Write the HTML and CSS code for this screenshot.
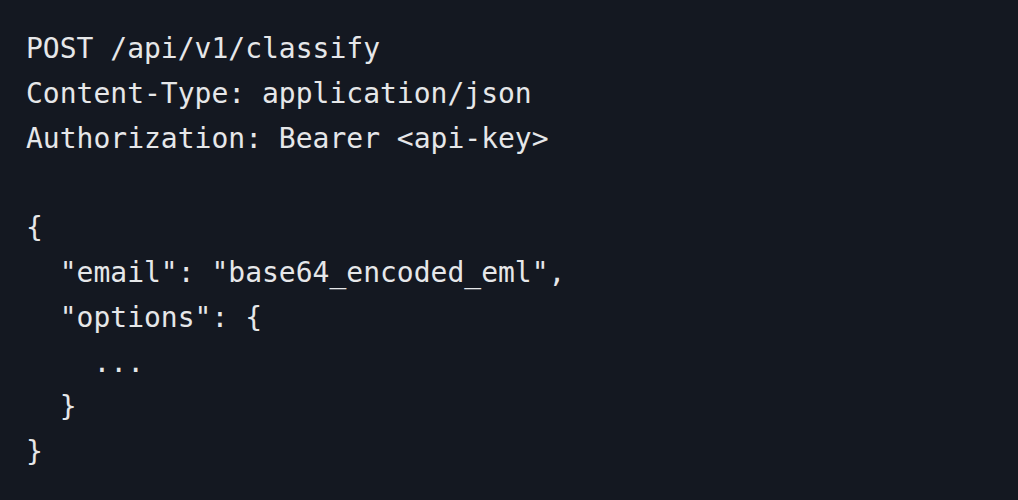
FILE: index.html
```html
<!DOCTYPE html>
<html lang="en">
<head>
<meta charset="utf-8">
<link rel="stylesheet" href="styles.css">
</head>
<body>
<pre class="code">POST /api/v1/classify
Content-Type: application/json
Authorization: Bearer &lt;api-key&gt;

{
  "email": "base64_encoded_eml",
  "options": {
    ...
  }
}</pre>
</body>
</html>
```
FILE: styles.css
```css
html, body {
  margin: 0;
  padding: 0;
  background: #141821;
  height: 100%;
}
.code {
  margin: 0;
  padding: 27px 24px 24px 26px;
  font-family: "DejaVu Sans Mono", "Liberation Mono", monospace;
  font-size: 28px;
  line-height: 44.8px;
  color: #e6e7e9;
  background: #141821;
  min-height: 100%;
  box-sizing: border-box;
}
```
